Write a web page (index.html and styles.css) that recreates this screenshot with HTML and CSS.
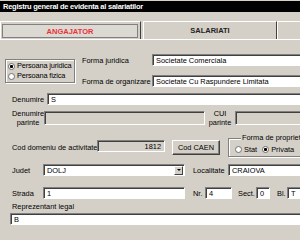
FILE: index.html
```html
<!DOCTYPE html>
<html lang="ro">
<head>
    <meta charset="UTF-8">
    <title>Registru general de evidenta al salariatilor</title>
    <link rel="stylesheet" href="styles.css">
</head>
<body>
    <div class="window">
        <div class="titlebar">Registru general de evidenta al salariatilor</div>

        <div class="tabs">
            <div class="tab tab-active"><span class="tab-label">ANGAJATOR</span></div>
            <div class="tab tab-second">SALARIATI</div>
            <div class="tab tab-rest"></div>
        </div>

        <div class="upper">
            <div class="person-box">
                <div class="radio-line"><span class="radio checked"></span>Persoana juridica</div>
                <div class="radio-line"><span class="radio"></span>Persoana fizica</div>
            </div>
            <div class="upper-fields">
                <div class="row">
                    <span class="lbl lbl-upper">Forma juridica</span>
                    <input class="field grow" type="text" value="Societate Comerciala">
                </div>
                <div class="row">
                    <span class="lbl lbl-upper">Forma de organizare</span>
                    <input class="field grow" type="text" value="Societate Cu Raspundere Limitata">
                </div>
            </div>
        </div>

        <div class="row row-denumire">
            <span class="lbl lbl-den">Denumire</span>
            <input class="field grow" type="text" value="S">
        </div>

        <div class="row row-parinte">
            <span class="lbl lbl-stack lbl-den-p">Denumire<br>parinte</span>
            <div class="field disabled parinte-box"></div>
            <span class="lbl lbl-stack lbl-cui">CUI<br>parinte</span>
            <div class="field disabled grow parinte-cui"></div>
        </div>

        <div class="row row-cod">
            <span class="lbl lbl-cod">Cod domeniu de activitate</span>
            <input class="field disabled cod-field" type="text" value="1812">
            <button class="btn" type="button">Cod CAEN</button>
            <fieldset class="prop-group">
                <legend>Forma de proprietate</legend>
                <span class="radio"></span><span class="radio-text">Stat</span>
                <span class="radio checked privata"></span><span class="radio-text">Privata</span>
            </fieldset>
        </div>

        <div class="row row-judet">
            <span class="lbl lbl-short">Judet</span>
            <div class="field combo">
                <span class="combo-text">DOLJ</span>
                <span class="combo-btn"><span class="arrow"></span></span>
            </div>
            <span class="lbl lbl-loc">Localitate</span>
            <input class="field grow" type="text" value="CRAIOVA">
        </div>

        <div class="row row-strada">
            <span class="lbl lbl-short">Strada</span>
            <input class="field strada-field" type="text" value="1">
            <span class="lbl lbl-nr">Nr.</span>
            <input class="field nr-field" type="text" value="4">
            <span class="lbl lbl-sect">Sect.</span>
            <input class="field sect-field" type="text" value="0">
            <span class="lbl lbl-bl">Bl.</span>
            <input class="field grow" type="text" value="T">
        </div>

        <div class="lbl lbl-rep">Reprezentant legal</div>
        <input class="field rep-field" type="text" value="B">
    </div>
</body>
</html>
```

FILE: styles.css
```css
html, body {
    margin: 0;
    overflow: hidden;
}

body {
    background-color: #d4d0c8;
    font: 7.4px/9px "Liberation Sans", Arial, sans-serif;
    color: #000;
}

.window {
    width: 320px;
    height: 240px;
}

.titlebar {
    margin-top: 1px;
    height: 11px;
    line-height: 11px;
    background-color: #000;
    color: #fff;
    font-weight: bold;
    font-size: 7.5px;
    letter-spacing: -0.25px;
    padding-left: 3px;
}

/* pestanas */
.tabs {
    display: flex;
    margin-top: 9px;
    height: 19px;
    box-sizing: border-box;
    border-bottom: 1px solid #fff;
}

.tab {
    box-sizing: border-box;
    border-top: 1px solid #fff;
    border-left: 1px solid #fff;
    border-right: 1px solid #404040;
    display: flex;
    align-items: center;
    justify-content: center;
    font-weight: bold;
    font-size: 7.5px;
    color: #222;
}

.tab-active {
    width: 141px;
    padding: 2px 2px 1px 1px;
    align-items: stretch;
}

.tab-label {
    flex: 1;
    border: 1px solid #808080;
    background-color: #dcd9d2;
    color: #e8323a;
    display: flex;
    align-items: center;
    justify-content: center;
}

.tab-second {
    width: 134px;
    margin-left: 2px;
}

.tab-rest {
    flex: 1;
    border-right: none;
}

/* campos */
.row {
    display: flex;
    align-items: center;
}

.lbl {
    white-space: nowrap;
}

.field {
    box-sizing: border-box;
    height: 12px;
    margin: 0;
    padding: 0 0 0 3px;
    border: 1px solid;
    border-color: #808080 #fff #fff #808080;
    box-shadow: inset 1px 1px 0 #404040;
    background-color: #fff;
    font: inherit;
    color: #000;
    outline: none;
    min-width: 0;
}

.field.disabled {
    background-color: #d4d0c8;
}

.grow {
    flex: 1;
}

.upper {
    display: flex;
    margin-top: 14px;
}

.person-box {
    margin: 5px 0 0 5px;
    width: 70px;
    height: 24px;
    box-sizing: border-box;
    border: 1px solid #808080;
    box-shadow: inset 1px 1px 0 #fff, 1px 1px 0 #fff;
    display: flex;
    flex-direction: column;
    justify-content: center;
    padding-left: 2px;
    white-space: nowrap;
    letter-spacing: -0.15px;
    overflow: hidden;
}

.radio-line {
    display: flex;
    align-items: center;
    line-height: 10px;
}

.radio {
    display: inline-block;
    width: 7px;
    height: 7px;
    box-sizing: border-box;
    border-radius: 50%;
    border: 1px solid #707070;
    background-color: #fff;
    margin-right: 2px;
    flex-shrink: 0;
}

.radio.checked {
    background: radial-gradient(circle, #000 1.3px, #fff 1.8px);
}

.upper-fields {
    flex: 1;
    margin-left: 7px;
    display: flex;
    flex-direction: column;
    gap: 9px;
}

.lbl-upper {
    width: 70px;
}

.row-denumire {
    margin-top: 6px;
    padding-left: 12px;
}

.lbl-den {
    width: 35px;
}

.row-parinte {
    margin-top: 6px;
    padding-left: 12px;
    height: 14px;
}

.lbl-stack {
    text-align: center;
    line-height: 9px;
}

.lbl-den-p {
    width: 32px;
}

.parinte-box {
    width: 161px;
    height: 14px;
}

.lbl-cui {
    width: 30px;
}

.parinte-cui {
    height: 14px;
}

.row-cod {
    margin-top: 9px;
    padding-left: 12px;
    align-items: flex-start;
}

.lbl-cod {
    width: 85px;
    margin-top: 9px;
}

.cod-field {
    width: 68px;
    margin-top: 6px;
    text-align: right;
    padding-right: 3px;
}

.btn {
    width: 48px;
    height: 15px;
    margin: 6px 0 0 7px;
    padding: 0;
    font: inherit;
    color: #000;
    background-color: #d4d0c8;
    border: 1px solid;
    border-color: #fff #404040 #404040 #fff;
    box-shadow: inset -1px -1px 0 #808080;
}

.prop-group {
    margin: 0 0 0 8px;
    padding: 0 0 0 6px;
    height: 23px;
    box-sizing: border-box;
    flex: 1;
    min-width: 0;
    border: 1px solid #808080;
    box-shadow: inset 1px 1px 0 #fff, 1px 1px 0 #fff;
    display: flex;
    align-items: center;
}

.prop-group legend {
    margin-left: 6px;
    padding: 0 1px;
    line-height: 8px;
    background-color: #d4d0c8;
    white-space: nowrap;
}

.radio-text {
    margin-right: 5px;
}

.row-judet {
    margin-top: 7px;
    padding-left: 12px;
}

.lbl-short {
    width: 31px;
}

.combo {
    width: 142px;
    display: flex;
    align-items: center;
    padding-right: 1px;
}

.combo-text {
    flex: 1;
}

.combo-btn {
    width: 9px;
    height: 9px;
    box-sizing: border-box;
    background-color: #d4d0c8;
    border: 1px solid;
    border-color: #fff #404040 #404040 #fff;
    display: flex;
    align-items: center;
    justify-content: center;
}

.arrow {
    width: 0;
    height: 0;
    border-left: 2px solid transparent;
    border-right: 2px solid transparent;
    border-top: 2px solid #000;
}

.lbl-loc {
    width: 35px;
    margin-left: 8px;
}

.row-strada {
    margin-top: 11px;
    padding-left: 12px;
}

.strada-field {
    width: 142px;
}

.lbl-nr {
    width: 12px;
    margin-left: 8px;
}

.nr-field {
    width: 27px;
}

.lbl-sect {
    width: 18px;
    margin-left: 6px;
}

.sect-field {
    width: 14px;
}

.lbl-bl {
    width: 10px;
    margin-left: 7px;
}

.lbl-rep {
    margin: 3px 0 0 12px;
}

.rep-field {
    display: block;
    margin: 2px 0 0 10px;
    width: 310px;
}
```
